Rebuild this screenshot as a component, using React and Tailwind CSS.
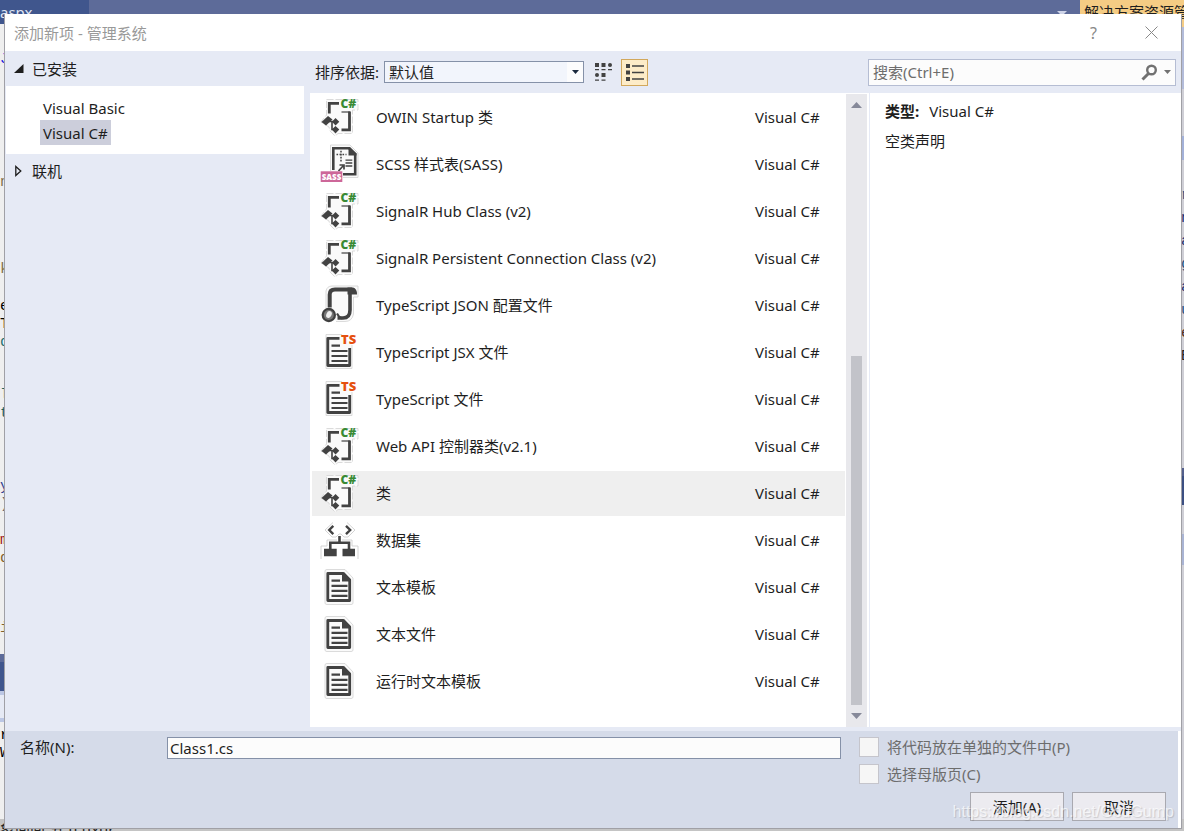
import { useState } from 'react';

const templates = [
    { name: 'OWIN Startup 类', icon: 'class' },
    { name: 'SCSS 样式表(SASS)', icon: 'sass' },
    { name: 'SignalR Hub Class (v2)', icon: 'class' },
    { name: 'SignalR Persistent Connection Class (v2)', icon: 'class' },
    { name: 'TypeScript JSON 配置文件', icon: 'json' },
    { name: 'TypeScript JSX 文件', icon: 'ts' },
    { name: 'TypeScript 文件', icon: 'ts' },
    { name: 'Web API 控制器类(v2.1)', icon: 'class' },
    { name: '类', icon: 'class' },
    { name: '数据集', icon: 'dataset' },
    { name: '文本模板', icon: 'text' },
    { name: '文本文件', icon: 'text' },
    { name: '运行时文本模板', icon: 'text' },
];

// Code peeking out at the left of the dialog
const leftCode = [
    { text: 'J', cls: 'h-[20px] mt-[27px] text-[#1515e0]' },
    { text: 'n', cls: 'h-[20px] mt-[103px] text-[#80704a]' },
    { text: 'k', cls: 'h-[20px] mt-[67px] text-[#80704a]' },
    { text: 'e', cls: 'h-[18px] mt-[17px] text-black' },
    { text: 'T', cls: 'h-[18px] text-black' },
    { text: 'd', cls: 'h-[18px] text-[#207070]' },
    { text: 'l', cls: 'h-[18px] mt-[35px] text-[#206060]' },
    { text: 't', cls: 'h-[18px] text-[#206060]' },
    { text: 'y', cls: 'h-[18px] mt-[55px] text-[#304090]' },
    { text: ')', cls: 'h-[18px] text-[#606060]' },
    { text: 'm', cls: 'h-[18px] mt-[18px] text-[#a01515]' },
    { text: 'd', cls: 'h-[18px] text-[#80602a]' },
    { text: 'i', cls: 'h-[18px] mt-[52px] text-[#80602a]' },
];

const rightCode = [
    { text: 'r', color: 'text-[#205080]' },
    { text: 'n', color: 'text-[#203070]' },
    { text: 'a', color: 'text-[#203070]' },
    { text: 'g', color: 'text-[#205080]' },
    { text: 'a', color: 'text-[#203070]' },
    { text: 'u', color: 'text-[#205080]' },
    { text: 'e', color: 'text-[#503020]' },
    { text: 'E', color: 'text-[#202020]' },
];

function ItemIcon({ kind }) {
    const ink = '#424242';
    return (
        <svg width="50" height="45" viewBox="0 0 50 45" className="shrink-0" fill="none" aria-hidden="true">
            {kind === 'class' && (
                <>
                    <path d="M10.5 4.5H42V15H36.5V38.5H22L19 41L14 36L13 32L5 27L10.5 20Z" fill="#fafafa" stroke="#d2d2d2" strokeWidth="0.8" strokeDasharray="7 2" />
                    <path d="M23 8.3H13.3V18.5" stroke={ink} strokeWidth="2.8" />
                    <path d="M33.5 16.5V34.8H25.5" stroke={ink} strokeWidth="2.8" />
                    <path d="M25.5 17H34" stroke={ink} strokeWidth="1.2" />
                    <path d="M5.5 27L12 21L16.5 24.5L10 30.5Z" fill={ink} />
                    <path d="M13 26.5H20M16 26.5V34.5H20" stroke={ink} strokeWidth="1.6" />
                    <path d="M19.5 23L23.3 26.7L19.5 30.4L16 26.7ZM19.5 31L23.3 34.6L19.5 38.4L15.8 34.6Z" fill={ink} />
                    <text x="24.5" y="13" fontSize="12" fontWeight="800" fill="#388a34" fontFamily="Open Sans, sans-serif">C#</text>
                </>
            )}
            {kind === 'sass' && (
                <>
                    <path d="M14.5 29V3H34L42 11V35.5H27" fill="#fafafa" stroke="#d2d2d2" strokeWidth="0.8" />
                    <path d="M17.3 28V6.3H33L39.2 12V32.3H27" stroke={ink} strokeWidth="2.6" />
                    <path d="M32.5 5H34L40.5 11.5V13.5H32.5Z" fill={ink} />
                    <path d="M25 8.8V19.5" stroke={ink} strokeWidth="1.5" strokeDasharray="1.6 1.4" />
                    <path d="M20.5 12.5H30.5" stroke={ink} strokeWidth="1.5" strokeDasharray="1.6 1.4" />
                    <path d="M29.5 18.2H36.3M29.5 21H36.3M29.5 24H36.3" stroke={ink} strokeWidth="1.3" />
                    <path d="M22.5 29L27 24M23.5 23H28V27.5" stroke={ink} strokeWidth="1.7" />
                    <rect x="4.7" y="29.3" width="21.6" height="10.7" fill="#cd6799" />
                    <text x="15.5" y="37.7" fontSize="8" fontWeight="800" fill="#fff" textAnchor="middle" fontFamily="Open Sans, sans-serif">SASS</text>
                </>
            )}
            {kind === 'json' && (
                <>
                    <path d="M10 25V8Q11 3 16 3H42V14H37.5V31Q36 38.5 29 38.5H20" fill="#fafafa" stroke="#d2d2d2" strokeWidth="0.8" />
                    <path d="M13.7 24.5V11.5Q13.7 6.6 19 6.6H36" stroke={ink} strokeWidth="4" />
                    <path d="M31.5 4.6H37Q41 5.5 41 11.5H31.5Z" fill={ink} />
                    <path d="M34 10V27Q34 35 27 35H21.5" stroke={ink} strokeWidth="3.6" />
                    <path d="M21 30.5Q22.5 34 26 35.5" stroke={ink} strokeWidth="2" />
                    <circle cx="12.8" cy="32" r="7.2" fill="#3f3f3f" />
                    <circle cx="12.8" cy="32" r="5" fill="#777" />
                    <ellipse cx="13" cy="31.5" rx="2.6" ry="3.6" fill="#eee" transform="rotate(25 13 31.5)" />
                </>
            )}
            {kind === 'ts' && (
                <>
                    <path d="M26 4.5H10V38.5H36V15" fill="#fafafa" stroke="#d2d2d2" strokeWidth="0.8" />
                    <path d="M23.5 8.3H11.8V35.5H33.7V18" stroke={ink} strokeWidth="2.8" strokeLinejoin="round" />
                    <path d="M15.5 15.7H24M15.5 21H31.5M15.5 26H31.5M15.5 31H31.5" stroke={ink} strokeWidth="2.2" />
                    <text x="25" y="13.5" fontSize="13" fontWeight="800" fill="#e5500f" fontFamily="Open Sans, sans-serif">TS</text>
                </>
            )}
            {kind === 'dataset' && (
                <>
                    <path d="M17 4.5L9 12L16 19H20L23 16H25L28 19H32L39 12L31 4.5M5 41V28H11V22H21M42 41V28H36V22H26" stroke="#cfcfcf" strokeWidth="0.9" />
                    <path d="M17.3 7.8L13.2 12L17.3 16.2M30 7.8L34.2 12L30 16.2" stroke={ink} strokeWidth="2.4" />
                    <path d="M23.5 18V24.5M14.3 31V24.7H33V31" stroke={ink} strokeWidth="2.6" />
                    <path d="M8 30.7H20.7V38.3H8ZM26.5 30.7H39V38.3H26.5Z" fill={ink} />
                </>
            )}
            {kind === 'text' && (
                <>
                    <path d="M11 4.5H29L37 13V38Q37 39.5 35 39.5H11Q9 39.5 9 38V6Q9 4.5 11 4.5Z" fill="#fafafa" stroke="#d2d2d2" strokeWidth="0.8" />
                    <path d="M11.8 8.5H27L33.7 15V35.5H11.8Z" stroke={ink} strokeWidth="2.8" strokeLinejoin="round" />
                    <path d="M26 8V16.5H35V14.5L28 7Z" fill={ink} />
                    <path d="M15.5 15.7H24M15.5 20.8H31.5M15.5 25.8H31.5M15.5 30.8H31.5" stroke={ink} strokeWidth="2.2" />
                </>
            )}
        </svg>
    );
}

function Backdrop() {
    return (
        <div className="absolute inset-0 flex flex-col overflow-hidden bg-[#c9c9cd]" aria-hidden="true">
            <div className="flex h-[24px] shrink-0 bg-[#5d6b99]">
                <div className="w-[89px] bg-[#40568d] text-[15px] leading-6 text-[#dfe4f2]">aspx</div>
                <div className="flex flex-1 justify-end pt-[11px] pr-[13px]">
                    <svg width="10" height="5" viewBox="0 0 10 5"><path d="M0 0H10L5 5Z" fill="#ced4e8" /></svg>
                </div>
                <div className="w-[104px] overflow-hidden bg-[#f5cc84] pl-1 text-[15px] leading-6 whitespace-nowrap text-[#1e1e1e]">解决方案资源管理器</div>
            </div>
            <div className="flex min-h-0 flex-1 justify-between">
                <div className="flex w-[5px] flex-col overflow-hidden bg-[#efefef] font-['Liberation_Mono'] text-[15px] leading-[18px]">
                    {leftCode.map((line, ix) => (
                        <span key={ix} className={`block shrink-0 ${line.cls}`}>{line.text}</span>
                    ))}
                    <div className="mt-[16px] h-[37px] shrink-0 border-t-8 border-[#5d6b99] bg-[#40568d]"></div>
                    <div className="h-[31px] shrink-0 border-y-4 border-[#bcc7e4] bg-[#e6eaf5]"></div>
                    <span className="mt-[5px] block h-[18px] shrink-0 text-black">r</span>
                    <span className="block h-[18px] shrink-0 text-black">W</span>
                </div>
                <div className="flex w-[3px] flex-col overflow-hidden bg-[#cfcfd6] font-['Liberation_Mono'] text-[15px] leading-[23px]">
                    <div className="h-[3px] shrink-0 bg-[#f5cc84]"></div>
                    <div className="h-[62px] shrink-0 bg-[#b3bcda]"></div>
                    <div className="h-[47px] shrink-0"></div>
                    <div className="mb-[24px] h-[24px] shrink-0 bg-[#a3b1d9]"></div>
                    {rightCode.map((line, ix) => (
                        <span key={ix} className={`block h-[23px] shrink-0 ${line.color}`}>{line.text}</span>
                    ))}
                    <div className="mt-[100px] h-[37px] shrink-0 border-t-8 border-[#535f8c] bg-[#3b4f82]"></div>
                    <div className="mt-[29px] h-[31px] shrink-0 bg-[#a9b4d4]"></div>
                </div>
            </div>
            <div className="h-[12px] shrink-0 overflow-hidden bg-[#c4c4c4] text-[15px] leading-[20px] text-[#222]">象间间 分 II uxur。</div>
        </div>
    );
}

export default function App() {
    const [selected, setSelected] = useState(8);
    const [fileName, setFileName] = useState('Class1.cs');

    return (
        <div className="relative flex min-h-screen flex-col pt-[14px] pr-[2px] pb-[2px] pl-[4px] font-['Noto_Sans','Noto_Sans_CJK_SC',sans-serif] text-[15px] leading-5 text-[#1e1e1e]">
            <Backdrop />

            <div className="relative flex flex-1 flex-col border-x border-b border-[#a0a0a6] bg-[#e6eaf5]">
                {/* Title bar */}
                <header className="flex h-[37px] items-center bg-white pl-[9px] text-[#999]">
                    <h1 className="flex-1">添加新项 - 管理系统</h1>
                    <button className="flex w-[57px] justify-center text-[16px] text-[#888]" aria-label="帮助">?</button>
                    <button className="flex w-[59px] justify-center" aria-label="关闭">
                        <svg width="13" height="13" viewBox="0 0 13 13" stroke="#888" strokeWidth="1"><path d="M0.5 0.5L12.5 12.5M12.5 0.5L0.5 12.5" /></svg>
                    </button>
                </header>

                <div className="flex flex-1">
                    {/* Installed categories */}
                    <nav className="w-[299px] shrink-0 pl-px">
                        <button className="flex h-[35px] items-center gap-2 pl-2">
                            <svg width="10" height="9" viewBox="0 0 10 9"><path d="M9.5 0V9H0Z" fill="#1e1e1e" /></svg>
                            已安装
                        </button>
                        <div className="flex flex-col items-start bg-white pt-[9px] pb-[9px] pl-[34px]">
                            <button className="h-[25px] px-[3px]">Visual Basic</button>
                            <button className="h-[25px] bg-[#cccedb] px-[3px]">Visual C#</button>
                        </div>
                        <button className="flex h-[34px] items-center gap-[10px] pl-[9px]">
                            <svg width="7" height="12" viewBox="0 0 7 12"><path d="M0.8 1.5L5.8 6L0.8 10.5Z" fill="none" stroke="#1e1e1e" strokeWidth="1.3" /></svg>
                            联机
                        </button>
                    </nav>

                    {/* Template list */}
                    <main className="ml-[6px] flex min-w-0 flex-1 flex-col pb-1">
                        <div className="flex h-[42px] shrink-0 items-center pl-[5px]">
                            <label htmlFor="sort" className="w-[69px] whitespace-nowrap">排序依据:</label>
                            <div className="relative">
                                <select id="sort" className="h-[22px] w-[200px] appearance-none border border-[#8591a8] bg-[#f2f5fc] pl-1 leading-5">
                                    <option>默认值</option>
                                </select>
                                <span className="pointer-events-none absolute inset-y-px right-px flex w-4 items-center justify-center bg-[#fcfcfd]">
                                    <svg width="7" height="4" viewBox="0 0 7 4"><path d="M0 0H7L3.5 4Z" fill="#1b293e" /></svg>
                                </span>
                            </div>
                            <button className="ml-[6px] flex size-[27px] items-center justify-center" aria-label="小图标">
                                <svg width="17" height="18" viewBox="0 0 17 18" fill="#424242">
                                    <path d="M0 0H4V4H0ZM6.5 0H10.5V4H6.5ZM0 6H4V7.2H0ZM6.5 6H10.5V7.2H6.5ZM13 6H17V7.2H13ZM6.5 10H10.5V14H6.5ZM0 16.5H4V17.7H0ZM6.5 16.5H10.5V17.7H6.5Z" />
                                    <circle cx="15" cy="2" r="2" /><circle cx="2" cy="12" r="2" />
                                </svg>
                            </button>
                            <button className="ml-[4px] flex size-[27px] items-center justify-center border border-[#d2a85c] bg-[#fdecc8]" aria-label="中图标">
                                <svg width="18" height="17" viewBox="0 0 18 17" fill="#424242">
                                    <path d="M0 0H4V4H0ZM0 6.5H4V10.5H0ZM0 13H4V17H0ZM6 1.2H18V2.8H6ZM6 7.7H18V9.3H6ZM6 14.2H18V15.8H6Z" />
                                </svg>
                            </button>
                        </div>
                        <div className="flex flex-1 bg-white">
                            <ul className="flex min-w-0 flex-1 flex-col gap-[2px] pt-[2px] pr-px pl-[2px]">
                                {templates.map((item, ix) => (
                                    <li key={ix}>
                                        <button
                                            onClick={() => setSelected(ix)}
                                            className={`flex h-[45px] w-full items-center pl-[4px] text-left ${ix === selected ? 'bg-[#efefef]' : ''}`}
                                        >
                                            <ItemIcon kind={item.icon} />
                                            <span className="ml-[10px] flex-1 pb-[2px]">{item.name}</span>
                                            <span className="w-[90px] pb-[2px]">Visual C#</span>
                                        </button>
                                    </li>
                                ))}
                            </ul>
                            <div className="mt-px mr-px flex w-[21px] flex-col items-center bg-[#e8e8ec]">
                                <div className="flex h-[22px] items-center">
                                    <svg width="11" height="6" viewBox="0 0 11 6"><path d="M0 6L5.5 0L11 6Z" fill="#868999" /></svg>
                                </div>
                                <div className="flex w-[11px] flex-1 flex-col">
                                    <div className="flex-[240_1_0%]"></div>
                                    <div className="flex-[349_1_0%] bg-[#c2c3c9]"></div>
                                </div>
                                <div className="flex h-[22px] items-center">
                                    <svg width="11" height="6" viewBox="0 0 11 6"><path d="M0 0H11L5.5 6Z" fill="#868999" /></svg>
                                </div>
                            </div>
                        </div>
                    </main>

                    {/* Details */}
                    <aside className="flex w-[313px] shrink-0 flex-col pb-1">
                        <div className="flex h-[42px] shrink-0 items-center pr-[5px]">
                            <div className="flex h-[27px] w-full items-center border border-[#b5bdd3] bg-[#fcfcfc] pr-1 pl-1">
                                <input aria-label="搜索" placeholder="搜索(Ctrl+E)" className="min-w-0 flex-1 outline-none placeholder:text-[#6d6d6d]" />
                                <button aria-label="搜索">
                                    <svg width="17" height="17" viewBox="0 0 17 17" fill="none" stroke="#717171"><circle cx="10.5" cy="6" r="4.3" strokeWidth="2.4" /><path d="M7.5 9.5L1.5 15.5" strokeWidth="3" /></svg>
                                </button>
                                <button className="ml-[6px]" aria-label="搜索选项">
                                    <svg width="7" height="4" viewBox="0 0 7 4"><path d="M0 0H7L3.5 4Z" fill="#717171" /></svg>
                                </button>
                            </div>
                        </div>
                        <div className="flex flex-1 bg-white pl-px">
                            <div className="flex-1 border-l border-[#e6eaf5] pt-2 pl-[15px]">
                                <p><b className="mr-[10px]">类型:</b>Visual C#</p>
                                <p className="mt-[10px]">空类声明</p>
                            </div>
                        </div>
                    </aside>
                </div>

                {/* Footer */}
                <footer className="flex h-[97px] shrink-0 border-r-[3px] border-white bg-[#d5dbe9] pr-3 pl-[15px]">
                    <div className="flex min-w-0 flex-1 items-start pt-[6px]">
                        <label htmlFor="file" className="w-[147px]">名称(N):</label>
                        <input
                            id="file"
                            value={fileName}
                            onChange={(e) => setFileName(e.target.value)}
                            className="h-[22px] min-w-0 flex-1 border border-[#8591a8] bg-[#fcfcfc] px-[2px] outline-none"
                        />
                    </div>
                    <div className="ml-[18px] flex w-[307px] flex-col pt-[6px] text-[#6d6d6d]">
                        <label className="flex h-[20px] items-center gap-2">
                            <input type="checkbox" disabled className="size-[20px] appearance-none border border-[#c5c5cc] bg-[#f6f6f6]" />
                            将代码放在单独的文件中(P)
                        </label>
                        <label className="mt-[7px] flex h-[20px] items-center gap-2">
                            <input type="checkbox" disabled className="size-[20px] appearance-none border border-[#c5c5cc] bg-[#f6f6f6]" />
                            选择母版页(C)
                        </label>
                        <div className="mt-[8px] flex justify-end gap-2 text-[#1e1e1e]">
                            <button className="h-[29px] w-[94px] border border-[#a9a9b0] bg-[#ecebf0]">添加(A)</button>
                            <button className="h-[29px] w-[94px] border border-[#a9a9b0] bg-[#ecebf0]">取消</button>
                        </div>
                    </div>
                </footer>
            </div>

            <div className="pointer-events-none absolute right-[10px] bottom-[9px] font-['Liberation_Sans'] text-[16px] text-white/70 [text-shadow:1px_1px_1px_rgba(0,0,0,0.15)]">https://blog.csdn.net/GodGump</div>
        </div>
    );
}
